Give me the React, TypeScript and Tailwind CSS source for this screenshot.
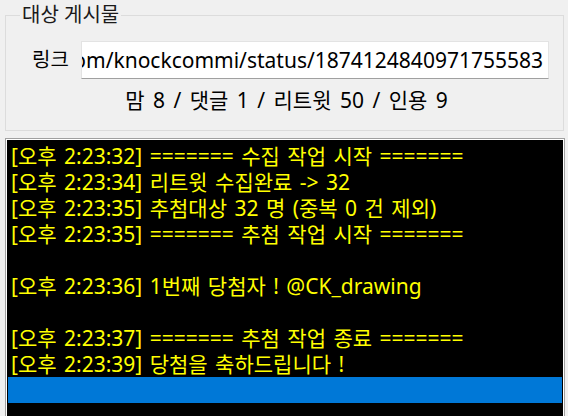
import React from "react";

const eq = "=======";
const lines: string[] = [
  `[오후 2:23:32] ${eq} 수집 작업 시작 ${eq}`,
  "[오후 2:23:34] 리트윗 수집완료 -> 32",
  "[오후 2:23:35] 추첨대상 32 명 (중복 0 건 제외)",
  `[오후 2:23:35] ${eq} 추첨 작업 시작 ${eq}`,
  "",
  "[오후 2:23:36] 1번째 당첨자 ! @CK_drawing",
  "",
  `[오후 2:23:37] ${eq} 추첨 작업 종료 ${eq}`,
  "[오후 2:23:39] 당첨을 축하드립니다 !",
  "",
];

export default function App() {
  return (
    <div
      className="w-[568px] h-[416px] overflow-hidden bg-[#f0f0f0] flex flex-col text-black"
      style={{ fontFamily: '"Noto Sans", "Noto Sans CJK KR", sans-serif' }}
    >
      <fieldset className="ml-[5px] w-[559px] min-w-0 h-[131px] border border-[#dcdcdc] shrink-0">
        <legend className="ml-[14px] px-[2px] text-[20px] leading-[30px] text-[#1a1a1a]">대상 게시물</legend>
        <div className="flex items-center mt-[11px] h-[38px] pl-[26px] pr-[14px]">
          <div className="w-[49px] text-[20px] leading-[24px] shrink-0">링크</div>
          <div className="flex-1 min-w-0 h-[38px] bg-white border border-[#e3e3e3] border-b-[#a0a0a0] flex justify-end items-center overflow-hidden whitespace-nowrap pr-[5px] text-[21px] leading-[24px]">
            <span className="shrink-0">https://x.com/knockcommi/status/1874124840971755583</span>
          </div>
        </div>
        <div className="mt-[9px] text-center text-[21px] leading-[24px] pl-[4px] [word-spacing:3px]">
          맘 8 / 댓글 1 / 리트윗 50 / 인용 9
        </div>
      </fieldset>
      <div className="ml-[5px] mt-[7px] w-[560px] h-[300px] border border-[#a0a0a0] bg-white p-[1px] shrink-0">
        <div className="w-full h-full bg-black pt-[3px] flex flex-col">
          {lines.map((t, i) => (
            <div
              key={i}
              className={
                i === lines.length - 1
                  ? "h-[26px] ml-[1px] mr-[1px] bg-[#0078d7] text-[#ffff00] text-[21px] leading-[26px] pl-[4px] whitespace-nowrap [word-spacing:2px]"
                  : "h-[26px] text-[#ffff00] text-[21px] leading-[26px] pl-[4px] whitespace-nowrap [word-spacing:2px]"
              }
            >
              {t}
            </div>
          ))}
        </div>
      </div>
    </div>
  );
}
